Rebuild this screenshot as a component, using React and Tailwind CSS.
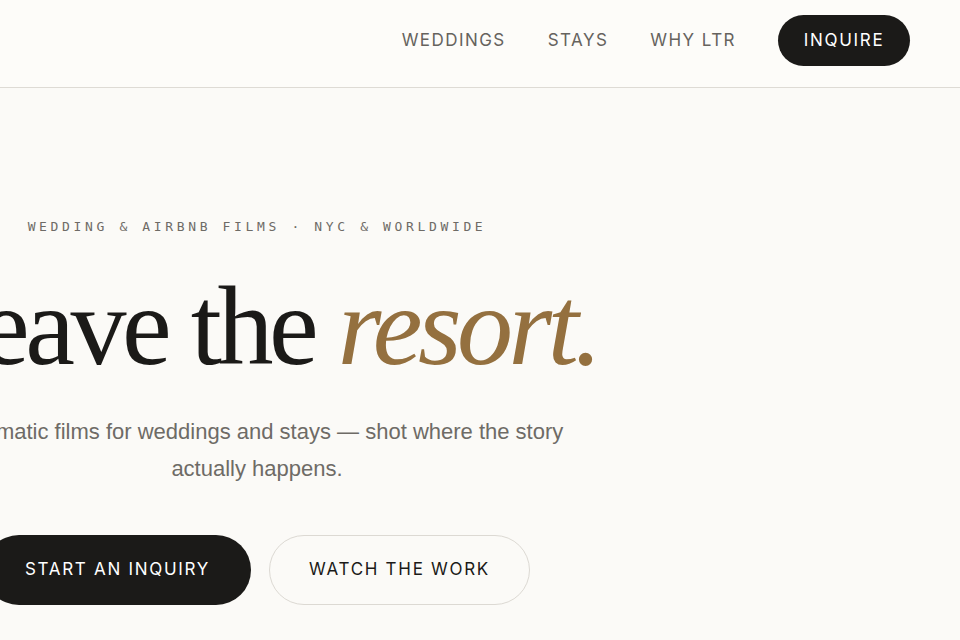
export default function App() {
  return (
    <div className="min-h-[640px] w-[960px] overflow-hidden bg-[#fbfaf7] font-['Inter',sans-serif]">
      <header className="h-[88px] border-b border-[#dedbd5] bg-[#fdfcf9] flex items-center justify-end pr-[50px] pb-[6px]">
        <nav className="flex items-center gap-[42px] text-[17px] tracking-[0.085em] text-[#66635e]">
          <a>WEDDINGS</a>
          <a>STAYS</a>
          <a>WHY LTR</a>
        </nav>
        <button className="ml-[42px] h-[51px] w-[132px] rounded-full bg-[#1b1a18] text-white text-[17px] tracking-[0.1em]">
          INQUIRE
        </button>
      </header>

      <main className="flex">
        <section className="w-[720px] shrink-0 ml-[-103px] flex flex-col items-center text-center pt-[131px]">
          <p className="font-['DejaVu_Sans_Mono',monospace] text-[13px] tracking-[0.28em] text-[#6e6b66] leading-[16px]">
            WEDDING &amp; AIRBNB FILMS · NYC &amp; WORLDWIDE
          </p>
          <h1 className="mt-[35px] font-['Liberation_Serif',serif] text-[112px] leading-[1] tracking-[-0.04em] text-[#1b1a18] whitespace-nowrap">
            Leave the <em className="italic text-[#94703f]">resort.</em>
          </h1>
          <p className="mt-[31px] w-[640px] font-['Liberation_Sans',sans-serif] text-[22px] leading-[37px] text-[#6e6b66]">
            Cinematic films for weddings and stays — shot where the story actually happens.
          </p>
          <div className="mt-[48px] flex gap-[18px]">
            <button className="h-[70px] w-[267px] rounded-full bg-[#1b1a18] text-white text-[17px] tracking-[0.1em]">
              START AN INQUIRY
            </button>
            <button className="h-[70px] w-[261px] rounded-full border border-[#dcd9d3] text-[#1b1a18] text-[17px] tracking-[0.1em]">
              WATCH THE WORK
            </button>
          </div>
        </section>
      </main>
    </div>
  )
}
